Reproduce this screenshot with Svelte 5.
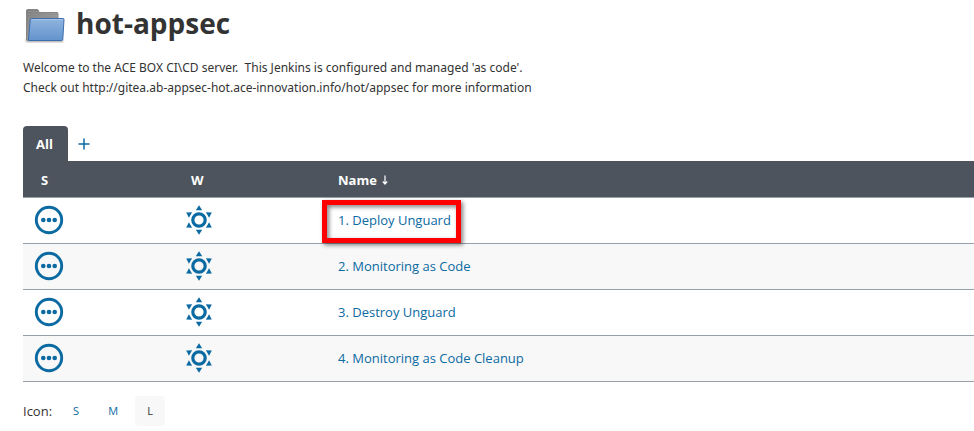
<script>
  const jobs = [
    '1. Deploy Unguard',
    '2. Monitoring as Code',
    '3. Destroy Unguard',
    '4. Monitoring as Code Cleanup'
  ];
  const rays = [0, 60, 120, 180, 240, 300];
  let size = $state('L');
</script>

<main>
  <header>
    <svg class="folder" viewBox="0 0 42 38" aria-hidden="true">
      <defs>
        <linearGradient id="back" x1="0" y1="0" x2="1" y2="1">
          <stop offset="0" stop-color="#7c7c7c" />
          <stop offset="1" stop-color="#b5b5b5" />
        </linearGradient>
        <linearGradient id="front" x1="0" y1="0" x2="0" y2="1">
          <stop offset="0" stop-color="#90b3de" />
          <stop offset="1" stop-color="#6394cd" />
        </linearGradient>
        <filter id="soft"><feGaussianBlur stdDeviation="1" /></filter>
      </defs>
      <path d="M3 33H40V36H3Z" fill="#777" opacity=".7" filter="url(#soft)" />
      <path d="M3.500 34V4.500Q3.500 3.500 4.500 3.500H14Q15.300 3.500 15.600 5L16 6.500H34Q35 6.500 35 7.500V20L6 34.500Z" fill="url(#back)" stroke="#858585" />
      <path d="M5 5.500H14M5 8.500H34M5 11H34M5 14H7M5 17H7M5 20H7M5 23H6" stroke="#8e8e8e" fill="none" />
      <path d="M8.500 12.500H40Q41 12.500 41 13.500L39.800 33Q39.700 34.500 38.500 34.500H6Q5.400 34.500 5.500 33L7.300 13.500Q7.500 12.500 8.500 12.500Z" fill="url(#front)" stroke="#3c6eae" />
      <path d="M9 13.600H40" stroke="#a9c6e9" />
    </svg>
    <h1>hot-appsec</h1>
  </header>

  <p class="description">
    Welcome to the ACE BOX CI\CD server.&nbsp; This Jenkins is configured and managed 'as code'.<br />
    Check out http://gitea.ab-appsec-hot.ace-innovation.info/hot/appsec for more information
  </p>

  <nav class="tabs" aria-label="Views">
    <a class="tab" href="#all" aria-current="page">All</a>
    <a class="add" href="#new" aria-label="New view">
      <svg viewBox="0 0 12 12" aria-hidden="true"><path d="M6 .5V11.500M.5 6H11.500" stroke="currentColor" stroke-width="1.500" /></svg>
    </a>
  </nav>

  <table>
    <thead>
      <tr>
        <th class="icon-col">S</th>
        <th class="icon-col">W</th>
        <th class="name">Name
          <svg class="arrow" viewBox="0 0 6 10" aria-hidden="true"><path d="M3 .5V9M.8 6.500L3 9L5.200 6.500" fill="none" stroke="currentColor" stroke-width="1.200" /></svg>
        </th>
      </tr>
    </thead>
    <tbody>
      {#each jobs as job, i}
        <tr>
          <td class="icon-col">
            <svg class="state" viewBox="0 0 28 28" role="img" aria-label="Not built">
              <circle cx="14" cy="14" r="12.700" fill="none" stroke="currentColor" stroke-width="2.900" />
              <circle cx="8.300" cy="14" r="2.300" fill="currentColor" />
              <circle cx="14" cy="14" r="2.300" fill="currentColor" />
              <circle cx="19.700" cy="14" r="2.300" fill="currentColor" />
            </svg>
          </td>
          <td class="icon-col">
            <svg class="state" viewBox="0 0 28 28" role="img" aria-label="Sunny">
              <circle cx="14" cy="14" r="6.200" fill="none" stroke="currentColor" stroke-width="3.200" />
              {#each rays as angle}
                <path d="M14 -.8L17.200 4.200H10.800Z" fill="currentColor" transform="rotate({angle} 14 14)" />
              {/each}
            </svg>
          </td>
          <td class="name"><a class:marked={i === 0} href="#job-{i + 1}">{job}</a></td>
        </tr>
      {/each}
    </tbody>
  </table>

  <div class="sizes">
    <span>Icon:</span>
    {#each ['S', 'M', 'L'] as option}
      <button class:selected={size === option} onclick={() => (size = option)}>{option}</button>
    {/each}
  </div>
</main>

<style>
  :global(body) {
    background: #fff;
  }
  main {
    padding: 6px 0 5px 23px;
    color: #333;
    font: 13px/20px "Open Sans", "Noto Sans", sans-serif;
    overflow: hidden;
  }
  header {
    display: flex;
    align-items: center;
    gap: 11px;
    height: 38px;
  }
  .folder {
    width: 42px;
    height: 38px;
  }
  h1 {
    margin: 0 0 4px;
    font-size: 28px;
    line-height: 36px;
    font-weight: 700;
  }
  .description {
    margin: 14px 0 28px;
    font-family: "Noto Sans", "Open Sans", sans-serif;
    font-size: 12px;
  }
  a {
    color: #0b6aa2;
    text-decoration: none;
  }
  .tabs {
    display: flex;
    align-items: center;
  }
  .tab {
    padding: 8px 15px 7px 13px;
    border-radius: 4px 4px 0 0;
    background: #4d545d;
    color: #fff;
    font-weight: 700;
  }
  .add {
    display: flex;
    padding: 12px 10px 11px;
  }
  .add svg {
    width: 12px;
    height: 12px;
  }
  table {
    width: 100%;
    border-collapse: separate;
    border-spacing: 0;
    table-layout: fixed;
  }
  th,
  td {
    box-sizing: border-box;
    padding: 0 12px;
    border-bottom: 1px solid #98a1ab;
    text-align: left;
  }
  th {
    height: 37px;
    padding-top: 2px;
    padding-left: 18px;
    background: #4d545d;
    color: #fff;
    font-weight: 700;
  }
  td {
    height: 46px;
    padding-bottom: 2px;
  }
  tbody tr:nth-child(even) {
    background: #f8f8f8;
  }
  .icon-col {
    width: 150px;
  }
  .name {
    padding-left: 15px;
  }
  .name a {
    position: relative;
    font-weight: 500;
  }
  .arrow {
    width: 6px;
    height: 10px;
    margin-left: 2px;
  }
  .state {
    display: block;
    width: 28px;
    height: 28px;
    overflow: visible;
    color: #0b6aa2;
  }
  .marked::after {
    content: "";
    position: absolute;
    inset: -11px -10px -14px -16px;
    border: 5px solid #f00;
    filter: drop-shadow(2px 2px 2px rgba(0, 0, 0, 0.5));
  }
  .sizes {
    display: flex;
    align-items: center;
    gap: 7px;
    margin-top: 14px;
  }
  .sizes span {
    margin-right: 2px;
  }
  button {
    width: 30px;
    height: 30px;
    padding: 0;
    border: 0;
    border-radius: 4px;
    background: transparent;
    color: #0b6aa2;
    font: 500 11px/20px "Open Sans", "Noto Sans", sans-serif;
    cursor: pointer;
  }
  .selected {
    background: #f8f8f8;
    color: #333;
  }
</style>
